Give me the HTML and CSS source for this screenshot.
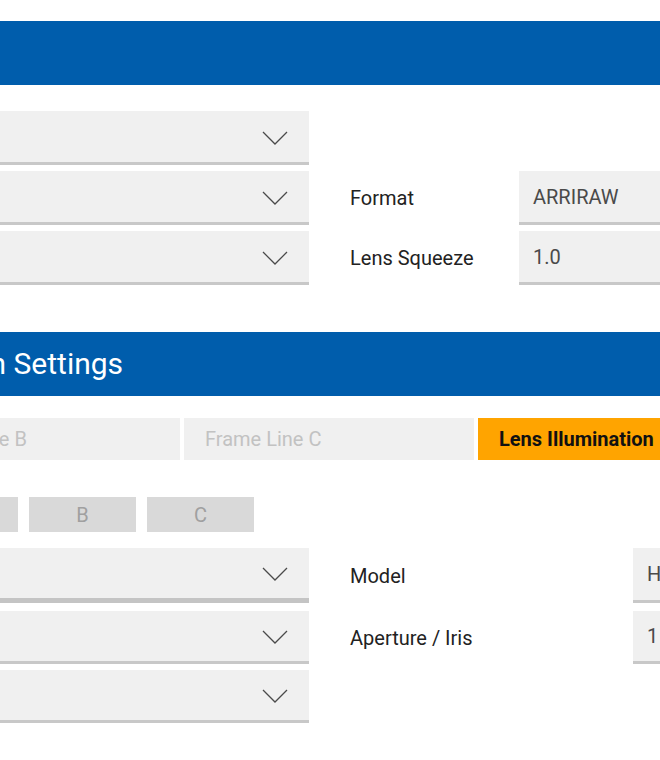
FILE: index.html
```html
<!DOCTYPE html>
<html lang="en">
<head>
<meta charset="utf-8">
<title>Settings</title>
<link rel="stylesheet" href="styles.css">
</head>
<body>
<div class="page">
  <header class="bar"></header>

  <section class="form upper">
    <div class="row">
      <div class="select"><svg class="chev" viewBox="0 0 26 14" width="26" height="14"><path d="M1 1 L13 13 L25 1" /></svg></div>
      <span class="label"></span>
      <div class="value empty"></div>
    </div>
    <div class="row">
      <div class="select"><svg class="chev" viewBox="0 0 26 14" width="26" height="14"><path d="M1 1 L13 13 L25 1" /></svg></div>
      <span class="label">Format</span>
      <div class="value">ARRIRAW</div>
    </div>
    <div class="row">
      <div class="select"><svg class="chev" viewBox="0 0 26 14" width="26" height="14"><path d="M1 1 L13 13 L25 1" /></svg></div>
      <span class="label">Lens Squeeze</span>
      <div class="value">1.0</div>
    </div>
  </section>

  <header class="bar bar-second"><h2 class="bar-title">Lens Illumination Settings</h2></header>

  <nav class="tabs">
    <div class="tab">Frame Line A</div>
    <div class="tab">Frame Line B</div>
    <div class="tab">Frame Line C</div>
    <div class="tab active">Lens Illumination</div>
  </nav>

  <div class="buttons">
    <div class="btn">A</div>
    <div class="btn">B</div>
    <div class="btn">C</div>
  </div>

  <section class="form lower">
    <div class="row first">
      <div class="select focus"><svg class="chev" viewBox="0 0 26 14" width="26" height="14"><path d="M1 1 L13 13 L25 1" /></svg></div>
      <span class="label">Model</span>
      <div class="value">H</div>
    </div>
    <div class="row">
      <div class="select"><svg class="chev" viewBox="0 0 26 14" width="26" height="14"><path d="M1 1 L13 13 L25 1" /></svg></div>
      <span class="label">Aperture / Iris</span>
      <div class="value">1</div>
    </div>
    <div class="row">
      <div class="select"><svg class="chev" viewBox="0 0 26 14" width="26" height="14"><path d="M1 1 L13 13 L25 1" /></svg></div>
      <span class="label"></span>
      <div class="value empty"></div>
    </div>
  </section>
</div>
</body>
</html>
```

FILE: styles.css
```css
html, body {
  margin: 0;
  padding: 0;
  background: #ffffff;
  overflow: hidden;
}

body {
  font-family: Roboto, "Noto Sans", "Liberation Sans", sans-serif;
  color: #222222;
}

.page {
  margin-left: -404px;
  width: 1467px;
  padding-top: 21px;
}

.bar {
  background: #005dac;
  height: 64px;
}

.bar-title {
  margin: 0;
  padding-left: 182px;
  font-size: 30px;
  font-weight: 400;
  line-height: 64px;
  color: #ffffff;
  white-space: nowrap;
}

.bar-second {
  margin-top: 47px;
}

.form {
  display: flex;
  flex-direction: column;
}

.upper {
  margin-top: 26px;
  gap: 6px;
}

.lower {
  margin-top: 16px;
  gap: 6px;
}

.lower .row.first {
  margin-bottom: 2px;
}

.row {
  display: flex;
  align-items: stretch;
}

.select {
  width: 713px;
  height: 54px;
  box-sizing: border-box;
  background: #f0f0f0;
  border-bottom: 3px solid #c8c8c8;
  display: flex;
  align-items: center;
  justify-content: flex-end;
  padding-right: 21px;
  flex: none;
}

.lower .select {
  height: 53px;
}

.lower .select.focus {
  height: 55px;
  border-bottom-width: 5px;
  border-bottom-color: #c4c4c4;
}

.chev {
  display: block;
  margin-top: 2px;
}

.chev path {
  fill: none;
  stroke: #4a4a4a;
  stroke-width: 1.3;
}

.label {
  margin-left: 41px;
  width: 169px;
  flex: none;
  display: flex;
  align-items: center;
  font-size: 20px;
  color: #222222;
  white-space: nowrap;
}

.lower .label {
  width: 283px;
}

.value {
  flex: 1;
  background: #f0f0f0;
  border-bottom: 3px solid #c8c8c8;
  display: flex;
  align-items: center;
  padding-left: 14px;
  font-size: 20px;
  color: #4a4a4a;
}

.value.empty {
  background: transparent;
  border-bottom-color: transparent;
}

.tabs {
  margin-top: 22px;
  display: flex;
  gap: 4px;
}

.tab {
  width: 290px;
  height: 42px;
  box-sizing: border-box;
  padding-left: 21px;
  background: #f0f0f0;
  display: flex;
  align-items: center;
  font-size: 20px;
  color: #c2c2c2;
  white-space: nowrap;
}

.tab.active {
  background: #ffa400;
  color: #111111;
  font-weight: 700;
}

.buttons {
  margin-top: 37px;
  padding-left: 315px;
  display: flex;
  gap: 11px;
}

.btn {
  width: 107px;
  height: 35px;
  background: #d9d9d9;
  color: #a0a0a0;
  font-size: 20px;
  display: flex;
  align-items: center;
  justify-content: center;
}
```
